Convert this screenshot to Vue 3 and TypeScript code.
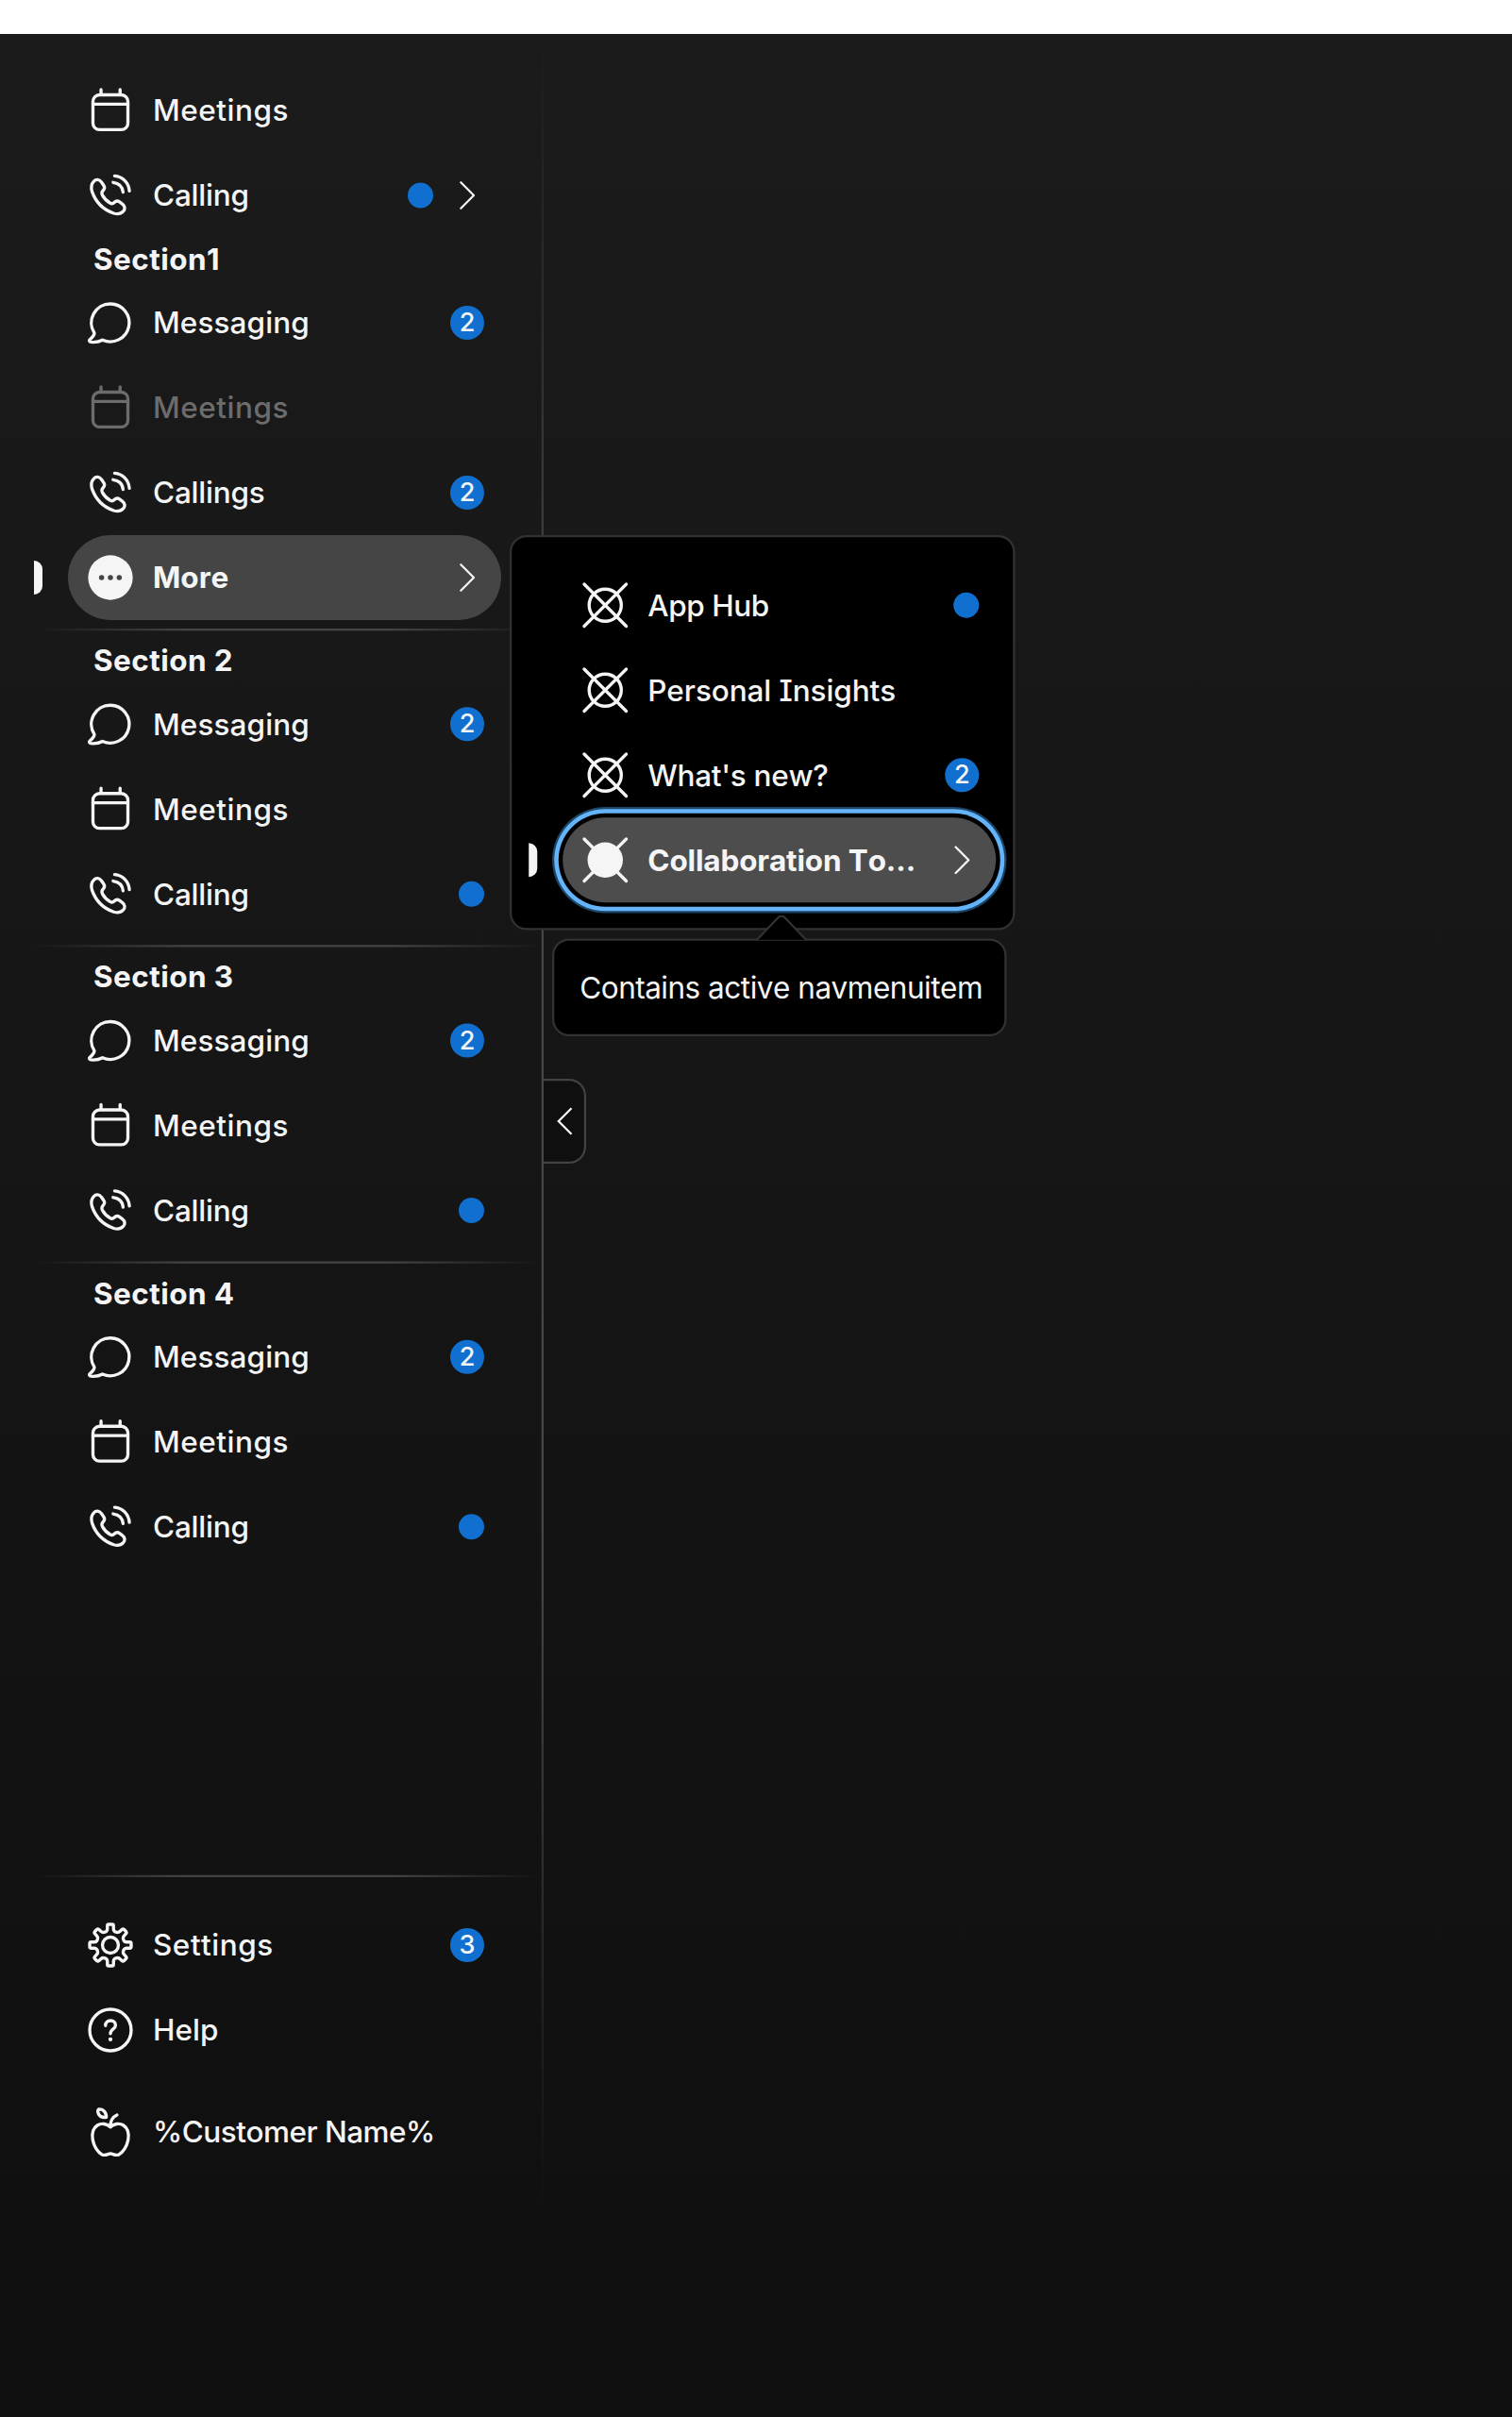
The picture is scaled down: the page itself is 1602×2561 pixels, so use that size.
<script setup lang="ts">
type IconName = 'meetings' | 'calling' | 'messaging' | 'more' | 'settings' | 'help' | 'apple' | 'placeholder' | 'placeholderFilled'

interface NavItem {
  label: string
  icon: IconName
  badge?: number
  dot?: boolean
  arrow?: boolean
  disabled?: boolean
  active?: boolean
  focused?: boolean
}

interface NavSection {
  title?: string
  divider?: boolean
  items: NavItem[]
}

const iconBox = '-3.4 -3.4 54.8 54.8'

const icons: Record<IconName, string> = {
  meetings:
    '<rect x="5.200" y="7.300" width="37.600" height="37.400" rx="7"/><path d="M5.200 17.300H42.800M13.900 1.700v5M34.400 1.700v5"/>',
  calling:
    '<path transform="translate(-.8 .3)" d="M7 8.600C9.200 6.100 13 6.300 15 9.300L17.600 13C19.100 15.200 18.700 16.700 16.800 18.600C15.100 20.300 15.200 21.500 16.200 23.600C18 27 21 30 24.700 32.100C26.500 33 27.400 32.900 29 31.300C30.700 29.500 32.500 29.200 34.600 30.700L37.600 32.900C40.700 35.200 40.800 38.600 38.600 40.900C36 43.600 32.400 44.200 28.400 43C16.600 38.900 8.600 30 5 19.500C3.700 15 4.200 11.400 7 8.600Z"/><path d="M26.900 10.100C33 10.800 37 14.800 37.600 20.600M28.500 3C37.200 3.700 43.700 10.400 44.400 19.300"/>',
  messaging:
    '<path d="M24 3.700A20.300 20.300 0 1 1 15.500 42.500C12.200 44.300 7.500 45.200 2.800 44.700C1.200 44.500 .8 43 1.900 42C4.700 39.700 6.600 37.600 6.700 35A20.300 20.300 0 0 1 24 3.700Z"/>',
  more:
    '<circle cx="24" cy="24" r="24" fill="currentColor" stroke="none"/><g fill="#454545" stroke="none"><circle cx="14.500" cy="24" r="2.800"/><circle cx="24" cy="24" r="2.800"/><circle cx="33.500" cy="24" r="2.800"/></g>',
  settings:
    '<circle cx="24" cy="24" r="8.600"/><path d="M22.200 1.700H25.800Q27.300 1.700 27.300 3.300V6.500Q27.300 9 29.800 10Q32.400 10.900 34.100 9.300L36.300 7.300Q37.500 6.200 38.700 7.300L40.700 9.300Q41.800 10.500 40.700 11.700L38.700 13.900Q37.100 15.600 38 18.200Q39 20.700 41.500 20.700H44.700Q46.300 20.700 46.300 22.200V25.800Q46.300 27.300 44.700 27.300H41.500Q39 27.300 38 29.800Q37.100 32.400 38.700 34.100L40.700 36.300Q41.800 37.500 40.700 38.700L38.700 40.700Q37.500 41.800 36.300 40.700L34.100 38.700Q32.400 37.100 29.800 38Q27.300 39 27.300 41.500V44.700Q27.300 46.300 25.800 46.300H22.200Q20.700 46.300 20.700 44.700V41.500Q20.700 39 18.200 38Q15.600 37.100 13.900 38.700L11.700 40.700Q10.500 41.800 9.300 40.700L7.300 38.700Q6.200 37.500 7.300 36.300L9.300 34.100Q10.900 32.400 10 29.800Q9 27.300 6.500 27.300H3.300Q1.700 27.300 1.700 25.800V22.200Q1.700 20.700 3.300 20.700H6.500Q9 20.700 10 18.200Q10.900 15.600 9.300 13.900L7.300 11.700Q6.200 10.500 7.300 9.300L9.300 7.300Q10.500 6.200 11.700 7.300L13.900 9.300Q15.600 10.900 18.200 10Q20.700 9 20.700 6.500V3.300Q20.700 1.700 22.200 1.700Z"/>',
  help:
    '<circle cx="24" cy="24" r="22.300"/><path d="M18.700 19.200C18.500 15.900 20.900 13.900 24.100 13.900C27.200 13.900 29.500 15.800 29.500 18.900C29.500 23 24 22.700 24 27.800"/><circle cx="24" cy="34" r="2.200" fill="currentColor" stroke="none"/>',
  apple:
    '<path d="M24 18.700C20.500 15.300 14.500 13.900 9.900 16.900C4.800 20.200 4 26.500 5 32.500C6.200 39.500 10.500 46 15 48.300C18.500 49.900 21 47.700 24 47.200C27 47.700 29.500 49.900 33 48.300C37.500 46 41.800 39.500 43 32.500C44 26.500 43.200 20.200 38.100 16.900C33.500 13.900 27.500 15.300 24 18.700ZM24 18.700C23.800 12.500 26 8 31 5.700"/><path d="M19.600 8.100C15.500 8.700 12.300 7.200 11 4.200C10.300 2.300 10.500 .300 11.500 -.500C15.500 -.800 19.500 1.800 19.600 8.100Z"/>',
  placeholder: '<circle cx="24" cy="24" r="17.300"/><path d="M1.400 1.400 46.600 46.600M46.600 1.400 1.400 46.600"/>',
  placeholderFilled:
    '<circle cx="24" cy="24" r="19" fill="currentColor" stroke="none"/><path d="M1.400 1.400 46.600 46.600M46.600 1.400 1.400 46.600"/>',
}

const tracking: Record<string, number> = {
  Meetings: 0.23,
  Messaging: 0.04,
  Calling: -0.1,
  Callings: -0.1,
  Settings: 0.23,
  'App Hub': -0.2,
  'Personal Insights': -0.04,
  "What's new?": -0.13,
  'Collaboration Tools': -0.07,
  '%Customer Name%': -0.23,
}

const track = (label: string) => ({ letterSpacing: `${tracking[label] ?? 0}px` })

const sections: NavSection[] = [
  {
    items: [
      { label: 'Meetings', icon: 'meetings' },
      { label: 'Calling', icon: 'calling', dot: true, arrow: true },
    ],
  },
  {
    title: 'Section1',
    items: [
      { label: 'Messaging', icon: 'messaging', badge: 2 },
      { label: 'Meetings', icon: 'meetings', disabled: true },
      { label: 'Callings', icon: 'calling', badge: 2 },
      { label: 'More', icon: 'more', arrow: true, active: true },
    ],
  },
  ...[2, 3, 4].map((n): NavSection => ({
    title: `Section ${n}`,
    divider: true,
    items: [
      { label: 'Messaging', icon: 'messaging', badge: 2 },
      { label: 'Meetings', icon: 'meetings' },
      { label: 'Calling', icon: 'calling', dot: true },
    ],
  })),
]

const footer: NavItem[] = [
  { label: 'Settings', icon: 'settings', badge: 3 },
  { label: 'Help', icon: 'help' },
]

const brand = '%Customer Name%'

const submenu: NavItem[] = [
  { label: 'App Hub', icon: 'placeholder', dot: true },
  { label: 'Personal Insights', icon: 'placeholder' },
  { label: "What's new?", icon: 'placeholder', badge: 2 },
  { label: 'Collaboration Tools', icon: 'placeholderFilled', arrow: true, active: true, focused: true },
]
</script>

<template>
  <div class="viewport">
    <div class="page">
      <div class="theme">
        <nav class="sidenav">
          <div class="scroll">
            <section v-for="(section, s) in sections" :key="s">
              <div v-if="section.divider" class="divider"></div>
              <h2 v-if="section.title" class="title">{{ section.title }}</h2>
              <div
                v-for="item in section.items"
                :key="item.label"
                class="item"
                :class="{ active: item.active, disabled: item.disabled }"
              >
                <svg class="icon" :viewBox="iconBox" v-html="icons[item.icon]"></svg>
                <span class="label" :style="track(item.label)">{{ item.label }}</span>
                <span v-if="item.dot" class="dot"></span>
                <span v-if="item.badge" class="badge">{{ item.badge }}</span>
                <svg v-if="item.arrow" class="arrow" viewBox="0 0 36 36"><path d="M11.300 4.200 25 18 11.300 31.800" /></svg>
              </div>
            </section>
          </div>
          <div class="fixed">
            <div class="divider"></div>
            <div v-for="item in footer" :key="item.label" class="item">
              <svg class="icon" :viewBox="iconBox" v-html="icons[item.icon]"></svg>
              <span class="label" :style="track(item.label)">{{ item.label }}</span>
              <span v-if="item.badge" class="badge">{{ item.badge }}</span>
            </div>
            <div class="item brand">
              <svg class="icon" :viewBox="iconBox" v-html="icons.apple"></svg>
              <span class="label" :style="track(brand)">{{ brand }}</span>
            </div>
          </div>
        </nav>
        <div class="rail">
          <button class="toggle" aria-label="Collapse">
            <svg viewBox="0 0 36 36"><path d="M25 4.200 11.300 18 25 31.800" /></svg>
          </button>
        </div>

        <div class="popover">
          <div
            v-for="item in submenu"
            :key="item.label"
            class="item"
            :class="{ active: item.active, focused: item.focused }"
          >
            <svg class="icon" :viewBox="iconBox" v-html="icons[item.icon]"></svg>
            <span class="label" :style="track(item.label)">{{ item.label }}</span>
            <span v-if="item.dot" class="dot"></span>
            <span v-if="item.badge" class="badge">{{ item.badge }}</span>
            <svg v-if="item.arrow" class="arrow" viewBox="0 0 36 36"><path d="M11.300 4.200 25 18 11.300 31.800" /></svg>
          </div>
        </div>

        <div class="tooltip">
          <svg class="pointer" viewBox="0 0 54 26">
            <path d="M1 26 23 3Q27 -1 31 3L53 26Z" fill="#000" />
            <path d="M1 26 23 3Q27 -1 31 3L53 26" fill="none" stroke="#323232" stroke-width="2.200" />
          </svg>
          Contains active navmenuitem
        </div>
      </div>
    </div>
  </div>
</template>

<style>
body {
  margin: 0;
  background: #fff;
}
</style>

<style scoped>
.viewport {
  width: 1602px;
  height: 2561px;
  overflow: hidden;
}
/* 712px wide layout, magnified to 225% */
.page {
  box-sizing: border-box;
  width: 712px;
  height: 1140px;
  padding-top: 16px;
  background: #fff;
  transform: scale(2.25);
  transform-origin: 0 0;
}
.theme {
  position: relative;
  display: flex;
  height: 1124px;
  background: linear-gradient(#1b1b1b, #0f0f0f);
  color: #f5f5f5;
  font: 500 14px/20px Inter, sans-serif;
  font-feature-settings: 'cv08' 1, 'kern' 0;
}
.sidenav {
  box-sizing: border-box;
  display: flex;
  flex-direction: column;
  width: 255px;
  height: 1024px;
  padding: 16px 0 0 16px;
}
.scroll {
  height: 847px;
}
.title {
  height: 20px;
  margin: 0 0 0 28px;
  font-size: 14px;
  font-weight: 700;
  line-height: 19.500px;
  letter-spacing: 0.19px;
}
.divider {
  height: 1px;
  margin: 4px 0;
  background: linear-gradient(90deg, transparent, #444 30%, #444 70%, transparent);
}
.fixed .divider {
  margin: 4px 0 12px;
}
.item {
  position: relative;
  box-sizing: border-box;
  display: flex;
  align-items: center;
  width: 204px;
  height: 40px;
  margin-left: 16px;
  padding: 0 8px;
  border-radius: 20px;
}
.popover .item {
  margin-left: 0;
}
.icon {
  flex: none;
  width: 24px;
  height: 24px;
  margin-right: 8px;
  overflow: visible;
  fill: none;
  stroke: currentColor;
  stroke-width: 3.400;
  stroke-linecap: round;
  stroke-linejoin: round;
}
.label {
  flex: 1;
  padding-bottom: 0.600px;
  overflow: hidden;
  white-space: nowrap;
  text-overflow: ellipsis;
}
.active {
  background: #454545;
  font-weight: 700;
}
.active::before {
  content: '';
  position: absolute;
  left: -16px;
  top: 12px;
  width: 4px;
  height: 16px;
  border-radius: 0 4px 4px 0;
  background: #f5f5f5;
}
.disabled {
  color: #6c6c6c;
}
.dot {
  width: 12px;
  height: 12px;
  border-radius: 50%;
  background: #1170cf;
}
.badge {
  width: 16px;
  height: 16px;
  border-radius: 50%;
  background: #1170cf;
  font-size: 12px;
  line-height: 16px;
  text-align: center;
}
.arrow {
  flex: none;
  width: 16px;
  height: 16px;
  margin-left: 8px;
  fill: none;
  stroke: #f5f5f5;
  stroke-width: 2.250;
  stroke-linecap: round;
  stroke-linejoin: round;
}
.brand {
  margin-top: 8px;
}
.rail {
  position: relative;
  width: 1px;
  height: 1024px;
  background: linear-gradient(transparent, #464646 30%, #464646 70%, transparent);
}
.toggle {
  position: absolute;
  top: 492px;
  left: 1px;
  box-sizing: border-box;
  width: 20px;
  height: 40px;
  padding: 0 0 0 2px;
  border: 1px solid #424242;
  border-left: 0;
  border-radius: 0 8px 8px 0;
  background: #0f0f0f;
}
.toggle svg {
  display: block;
  width: 16px;
  height: 16px;
  fill: none;
  stroke: #f5f5f5;
  stroke-width: 2.250;
}
.popover {
  position: absolute;
  left: 240px;
  top: 236px;
  box-sizing: border-box;
  width: 238px;
  height: 186px;
  padding: 12px 8px 12px 24px;
  border: 1px solid #323232;
  border-radius: 8px;
  background: #000;
}
.popover .active {
  background: #4d4d4d;
}
.focused {
  box-shadow: 0 0 0 2px #000, 0 0 0 4px #64b4fa, 0 0 0 5px #1d4568;
}
.tooltip {
  position: absolute;
  left: 260px;
  top: 426px;
  box-sizing: border-box;
  width: 214px;
  height: 46px;
  padding: 12px;
  border: 1px solid #323232;
  border-radius: 8px;
  background: #000;
  font-weight: 400;
  letter-spacing: -0.215px;
  white-space: nowrap;
}
.pointer {
  position: absolute;
  left: 94.600px;
  top: -11.560px;
  width: 24px;
  height: 11.560px;
}
</style>
